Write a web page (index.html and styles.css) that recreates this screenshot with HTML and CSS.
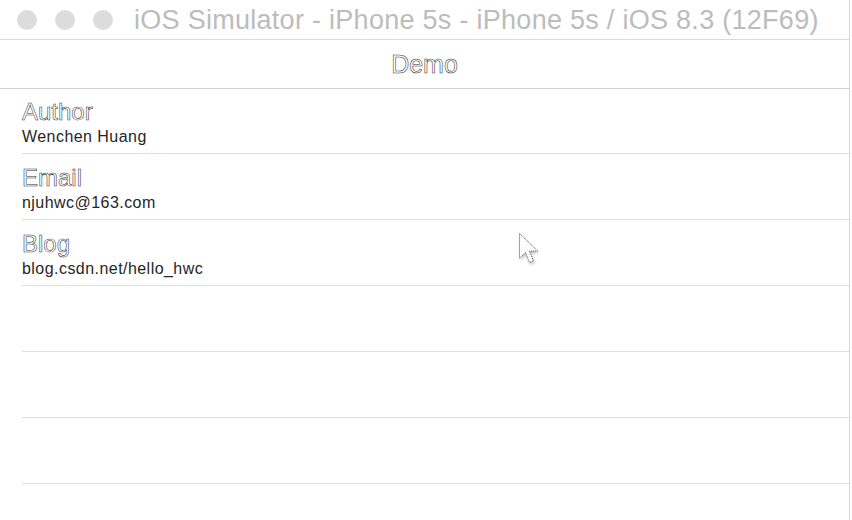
FILE: index.html
```html
<!DOCTYPE html>
<html>
<head>
<meta charset="utf-8">
<link rel="stylesheet" href="styles.css">
</head>
<body>
<div class="window">
  <div class="titlebar">
    <span class="light"></span>
    <span class="light"></span>
    <span class="light"></span>
    <span class="wintitle">iOS Simulator - iPhone 5s - iPhone 5s / iOS 8.3 (12F69)</span>
  </div>
  <div class="navbar"><span class="navtitle">Demo</span></div>
  <div class="table">
    <div class="row"><div class="cell-title">Author</div><div class="cell-sub">Wenchen Huang</div></div>
    <div class="row"><div class="cell-title">Email</div><div class="cell-sub">njuhwc@163.com</div></div>
    <div class="row"><div class="cell-title">Blog</div><div class="cell-sub">blog.csdn.net/hello_hwc</div></div>
    <div class="row"></div>
    <div class="row"></div>
    <div class="row"></div>
  </div>
  <svg class="cursor" width="22" height="34" viewBox="0 0 22 34">
    <path d="M1.5 1.5 L1.5 26 L7.5 20.5 L11.5 30.5 L15.5 28.8 L11.5 19 L19.5 19 Z" fill="#fff" stroke="#444" stroke-width="0.9" stroke-dasharray="1 1"/>
  </svg>
</div>
</body>
</html>
```

FILE: styles.css
```css
html, body {
  margin: 0;
  padding: 0;
  background: #fff;
}
body {
  width: 852px;
  height: 520px;
  overflow: hidden;
  font-family: "Liberation Sans", Arial, sans-serif;
}
.window {
  position: relative;
  width: 849px;
  height: 520px;
  border-right: 1px solid #d8d8d8;
  background: #fff;
}
.titlebar {
  height: 39px;
  border-bottom: 1px solid #dadada;
  display: flex;
  align-items: center;
  padding-left: 17px;
  box-sizing: content-box;
}
.light {
  width: 20px;
  height: 20px;
  border-radius: 50%;
  background: #dcdcdc;
  margin-right: 18px;
  flex: none;
}
.light:nth-child(3) {
  margin-right: 21px;
}
.wintitle {
  font-size: 27px;
  letter-spacing: 0.28px;
  color: #bcbcbc;
  white-space: nowrap;
  line-height: 30px;
  margin-top: 1px;
}
.navbar {
  height: 48px;
  border-bottom: 1px solid #cfcfcf;
  display: flex;
  align-items: center;
  justify-content: center;
}
.navtitle {
  font-size: 25px;
  color: #fff;
  -webkit-text-stroke: 0.55px #333;
  line-height: 28px;
}
.table {
  display: flex;
  flex-direction: column;
}
.row {
  margin-left: 22px;
  border-bottom: 1px solid #dedede;
  padding-top: 10px;
  box-sizing: border-box;
  height: 66px;
}
.row:first-child {
  height: 65px;
  padding-top: 9px;
}
.cell-title {
  font-size: 24px;
  line-height: 28px;
  color: #fff;
  -webkit-text-stroke: 0.55px #333;
}
.cell-sub {
  font-size: 16px;
  letter-spacing: 0.45px;
  line-height: 18px;
  margin-top: 2px;
  color: #262626;
}
.cursor {
  position: absolute;
  left: 518px;
  top: 232px;
  filter: drop-shadow(1px 2px 1.5px rgba(0,0,0,0.25));
}
```
